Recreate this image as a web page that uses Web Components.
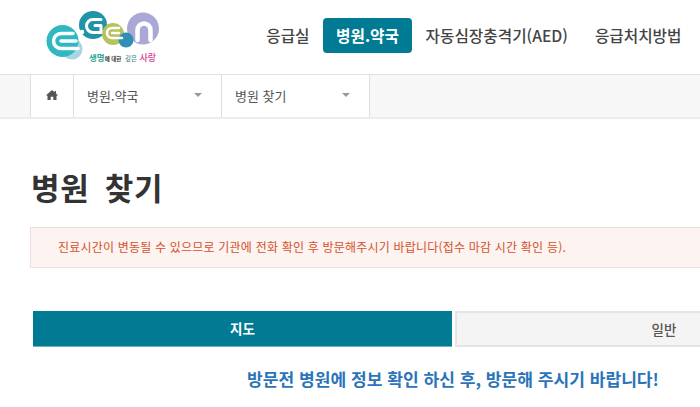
<!DOCTYPE html>
<html lang="ko">
<head>
<meta charset="utf-8">
<title>병원 찾기</title>
<style>
    html, body
    {
        margin: 0;
        width: 700px;
        height: 407px;
        overflow: hidden;
        background: #fff;
        font-family: "Noto Sans CJK KR", "Open Sans", sans-serif;
        color: #333;
    }
</style>
</head>
<body>

<site-header></site-header>
<crumb-bar></crumb-bar>
<page-main></page-main>

<script>
class SiteLogo extends HTMLElement
{
    constructor()
    {
        super();
        this.dom = this.attachShadow({mode: 'open'});
        this.dom.innerHTML = `
            <style>
                :host
                {
                    display: block;
                    position: relative;
                    width: 120px;
                    height: 56px;
                }
                svg { display: block; }
                .tag
                {
                    position: absolute;
                    left: 46px;
                    top: 42px;
                    display: flex;
                    align-items: baseline;
                    white-space: pre;
                    font-size: 5.500px;
                    line-height: 11px;
                    font-weight: 700;
                    color: #333;
                }
                .a { font-size: 8.500px; color: #2fa69a; }
                .b { font-size: 9px; font-weight: 500; color: #d9409a; margin-left: 2.500px; }
                .c { font-size: 6.500px; font-weight: 500; color: #4a8a8a; margin-left: 2px; }
            </style>
            <svg width="120" height="56" viewBox="0 0 120 56">
                <circle cx="100" cy="18.500" r="16" fill="#a9a8d6"/>
                <circle cx="29" cy="39" r="10.500" fill="#a9d4e2"/>
                <circle cx="19.500" cy="31" r="16" fill="#2fb8c0"/>
                <circle cx="50" cy="15" r="14" fill="#1f93a8"/>
                <circle cx="70" cy="24" r="11" fill="#b6c25a"/>
                <circle cx="83" cy="30" r="7.500" fill="#2f8fb5"/>
                <path d="M94.500 30 V20 a6.500 6.500 0 0 1 13 0 V30" fill="none" stroke="#fff" stroke-width="4.500" stroke-linecap="round"/>
                <path d="M30 23.500 H18 a7.500 7.500 0 0 0 0 15 H35" fill="none" stroke="#fff" stroke-width="3.500" stroke-linecap="round"/>
                <path d="M18 31 H33" fill="none" stroke="#fff" stroke-width="3.500" stroke-linecap="round"/>
                <circle cx="39" cy="22" r="2.300" fill="#fff"/>
                <path d="M58 9.500 H50 a6.500 6.500 0 0 0 0 13 H58 V15.500 H52" fill="none" stroke="#fff" stroke-width="3" stroke-linecap="round" stroke-linejoin="round"/>
                <path d="M76 18 H69 a5 5 0 0 0 0 10 H79" fill="none" stroke="#fff" stroke-width="2.500" stroke-linecap="round"/>
                <path d="M69 23 H76" fill="none" stroke="#fff" stroke-width="2.500" stroke-linecap="round"/>
            </svg>
            <div class="tag"><span class="a">생명</span><span>에 대한 </span><span class="c">깊은</span><span class="b">사랑</span></div>
        `;
    }
}

class NavItem extends HTMLElement
{
    constructor()
    {
        super();
        this.dom = this.attachShadow({mode: 'open'});
        this.dom.innerHTML = `
            <style>
                :host
                {
                    display: block;
                    font-size: 15.700px;
                    font-weight: 500;
                    line-height: 35px;
                    padding: 0 13.500px;
                    border-radius: 4px;
                    color: #444;
                    white-space: nowrap;
                }
                :host([active])
                {
                    box-sizing: border-box;
                    width: 89px;
                    padding: 0;
                    text-align: center;
                    background: #017a94;
                    color: #fff;
                    font-weight: 700;
                }
            </style>
            <slot></slot>
        `;
    }
}

class SiteHeader extends HTMLElement
{
    constructor()
    {
        super();
        this.dom = this.attachShadow({mode: 'open'});
        this.dom.innerHTML = `
            <style>
                :host
                {
                    display: flex;
                    align-items: flex-start;
                    justify-content: space-between;
                    box-sizing: border-box;
                    height: 75px;
                    border-bottom: 1px solid #e0e0e0;
                    width: 700px;
                }
                site-logo { margin: 10px 0 0 43px; }
                nav
                {
                    display: flex;
                    margin: 18px 0 0 0;
                    padding-right: 5px;
                }
            </style>
            <site-logo></site-logo>
            <nav>
                <nav-item>응급실</nav-item>
                <nav-item active>병원.약국</nav-item>
                <nav-item>자동심장충격기(AED)</nav-item>
                <nav-item>응급처치방법</nav-item>
            </nav>
        `;
    }
}

class CrumbSelect extends HTMLElement
{
    constructor()
    {
        super();
        this.dom = this.attachShadow({mode: 'open'});
        this.dom.innerHTML = `
            <style>
                :host
                {
                    display: flex;
                    align-items: center;
                    justify-content: space-between;
                    box-sizing: border-box;
                    width: 148px;
                    padding: 0 19px 2px 13px;
                    background: #fff;
                    border-right: 1px solid #dedede;
                    font-size: 13px;
                    color: #555;
                }
                i
                {
                    width: 0;
                    height: 0;
                    border-style: solid;
                    border-width: 4px 4px 0 4px;
                    border-color: #999 transparent transparent transparent;
                }
            </style>
            <span><slot></slot></span><i></i>
        `;
    }
}

class CrumbBar extends HTMLElement
{
    constructor()
    {
        super();
        this.dom = this.attachShadow({mode: 'open'});
        this.dom.innerHTML = `
            <style>
                :host
                {
                    display: flex;
                    box-sizing: border-box;
                    width: 700px;
                    height: 44px;
                    padding-left: 30px;
                    background: #f7f7f7;
                    border-bottom: 2px solid #ececec;
                }
                .home
                {
                    display: flex;
                    align-items: center;
                    justify-content: center;
                    box-sizing: border-box;
                    width: 44px;
                    padding-bottom: 2px;
                    background: #fff;
                    border-left: 1px solid #dedede;
                    border-right: 1px solid #dedede;
                }
                svg { display: block; }
            </style>
            <div class="home">
                <svg width="12" height="10" viewBox="0 0 12 10">
                    <path d="M6 0 L8.500 2.200 V1 H10 V3.500 L12 5.200 L10.500 5.800 V10 H7.300 V6.800 H4.700 V10 H1.500 V5.800 L0 5.200 Z" fill="#555"/>
                </svg>
            </div>
            <crumb-select>병원.약국</crumb-select>
            <crumb-select>병원 찾기</crumb-select>
        `;
    }
}

class NoticeBox extends HTMLElement
{
    constructor()
    {
        super();
        this.dom = this.attachShadow({mode: 'open'});
        this.dom.innerHTML = `
            <style>
                :host
                {
                    display: block;
                    box-sizing: border-box;
                    height: 41px;
                    padding: 0 27px;
                    background: #fdf3f0;
                    border: 1px solid #ecdfdc;
                    font-size: 12px;
                    letter-spacing: 0.200px;
                    line-height: 38px;
                    color: #d4522a;
                    white-space: nowrap;
                }
            </style>
            <slot></slot>
        `;
    }
}

class TabBar extends HTMLElement
{
    constructor()
    {
        super();
        this.dom = this.attachShadow({mode: 'open'});
        this.dom.innerHTML = `
            <style>
                :host
                {
                    display: grid;
                    grid-template-columns: 419px 418px;
                    column-gap: 3px;
                    height: 36px;
                    font-size: 13.500px;
                    font-weight: 500;
                    text-align: center;
                }
                div { box-sizing: border-box; line-height: 34px; }
                .on
                {
                    background: #017a94;
                    border-bottom: 1px solid #6fb4c4;
                    color: #fff;
                    font-weight: 700;
                }
                .off
                {
                    background: #f4f4f4;
                    border: 2px solid #e4e4e4;
                    line-height: 32px;
                    color: #555;
                }
            </style>
            <div class="on">지도</div>
            <div class="off">일반</div>
        `;
    }
}

class PageMain extends HTMLElement
{
    constructor()
    {
        super();
        this.dom = this.attachShadow({mode: 'open'});
        this.dom.innerHTML = `
            <style>
                :host
                {
                    display: block;
                    width: 880px;
                    padding: 46px 0 0 30px;
                }
                h1
                {
                    margin: 0 0 0 1px;
                    font-size: 31px;
                    line-height: 44px;
                    font-weight: 700;
                    letter-spacing: 0.700px;
                    word-spacing: 6px;
                    color: #333;
                }
                notice-box { margin-top: 18px; }
                tab-bar { margin: 43px 0 0 3px; }
                p
                {
                    margin: 20px 0 0 4px;
                    width: 838px;
                    text-align: center;
                    font-size: 17.100px;
                    line-height: 24px;
                    font-weight: 700;
                    color: #2b74b8;
                    white-space: nowrap;
                }
            </style>
            <h1>병원 찾기</h1>
            <notice-box>진료시간이 변동될 수 있으므로 기관에 전화 확인 후 방문해주시기 바랍니다(접수 마감 시간 확인 등).</notice-box>
            <tab-bar></tab-bar>
            <p>방문전 병원에 정보 확인 하신 후, 방문해 주시기 바랍니다!</p>
        `;
    }
}

customElements.define("site-logo", SiteLogo);
customElements.define("nav-item", NavItem);
customElements.define("site-header", SiteHeader);
customElements.define("crumb-select", CrumbSelect);
customElements.define("crumb-bar", CrumbBar);
customElements.define("notice-box", NoticeBox);
customElements.define("tab-bar", TabBar);
customElements.define("page-main", PageMain);
</script>
</body>
</html>
